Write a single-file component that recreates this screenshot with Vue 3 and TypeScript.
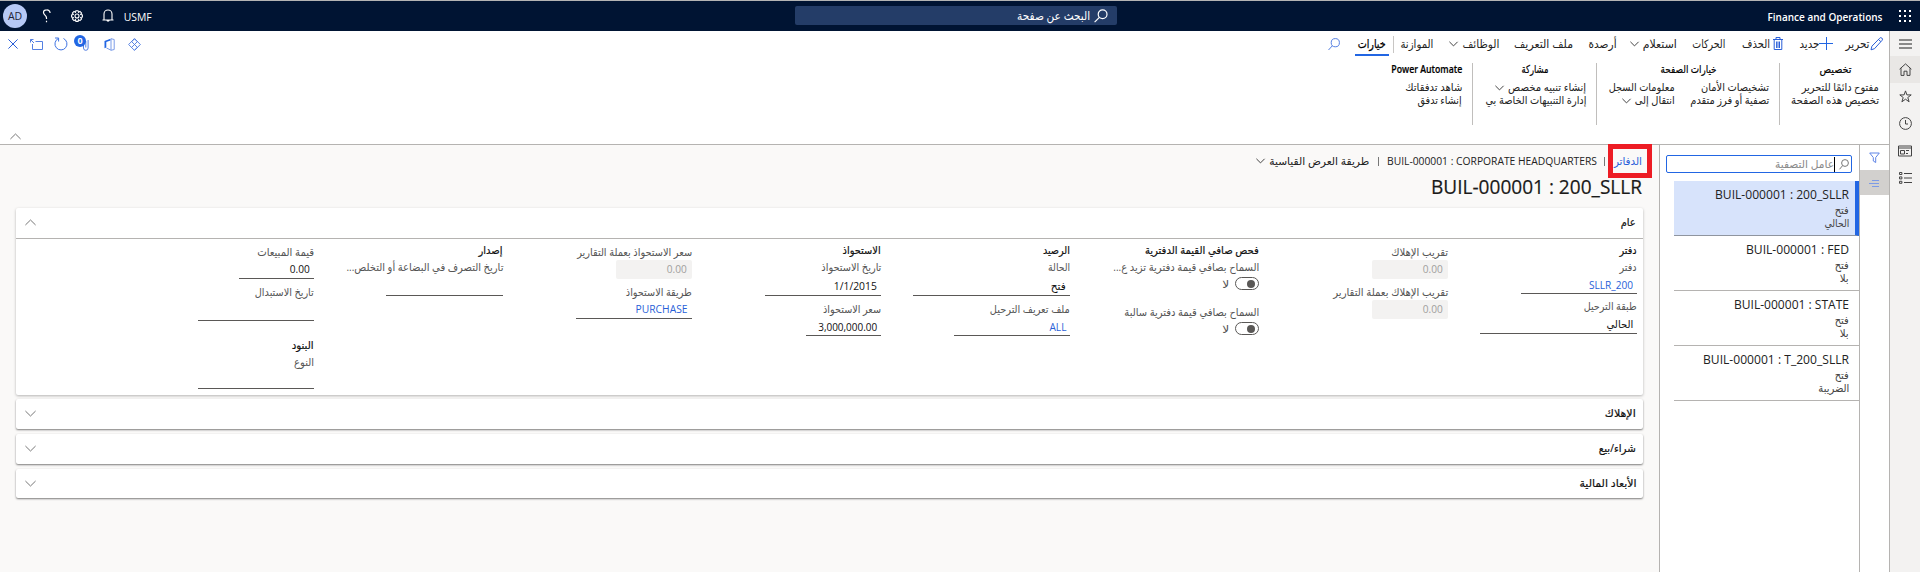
<script setup lang="ts">
interface Cmd { text: string; w: number; gap: number; icon?: string; chev?: boolean }
interface Field { kind: 'head' | 'label' | 'input' | 'box' | 'toggle'; h: number; text?: string; tw?: number; gap?: number; w?: number; link?: boolean }

// Squeezes or stretches a text run horizontally so that it occupies a fixed width.
const vFit = {
  mounted(el: HTMLElement, binding: { value?: number }) {
    if (!binding.value) return
    const natural = el.getBoundingClientRect().width
    if (!natural) return
    const rtl = getComputedStyle(el).direction === 'rtl'
    el.style.transformOrigin = rtl ? '100% 50%' : '0 50%'
    el.style.transform = `scaleX(${binding.value / natural})`
    el.style.marginInlineEnd = `${binding.value - natural}px`
  },
}

const commands: Cmd[] = [
  { text: 'تحرير', w: 24, gap: 6, icon: 'pencil' },
  { text: 'جديد', w: 20, gap: 13, icon: 'plus' },
  { text: 'الحذف', w: 28, gap: 16, icon: 'trash' },
  { text: 'الحركات', w: 33, gap: 17 },
  { text: 'استعلام', w: 34, gap: 15, chev: true },
  { text: 'أرصدة', w: 28, gap: 13 },
  { text: 'ملف التعريف', w: 59, gap: 16 },
  { text: 'الوظائف', w: 37, gap: 15, chev: true },
  { text: 'الموازنة', w: 33, gap: 16 },
]

const groups = [
  { title: 'تخصيص', tw: 32, w: 99, cols: [[{ t: 'مفتوح دائمًا للتحرير', w: 77 }, { t: 'تخصيص هذه الصفحة', w: 88 }]] },
  { title: 'خيارات الصفحة', tw: 56, w: 172, cols: [[{ t: 'تشخيصات الأمان', w: 68 }, { t: 'تصفية أو فرز متقدم', w: 79 }], [{ t: 'معلومات السجل', w: 66 }, { t: 'انتقال إلى', w: 40, c: true }]] },
  { title: 'مشاركة', tw: 27, w: 113, cols: [[{ t: 'إنشاء تنبيه مخصص', w: 78, c: true }, { t: 'إدارة التنبيهات الخاصة بي', w: 101 }]] },
  { title: 'Power Automate', tw: 71, w: 71, cols: [[{ t: 'شاهد تدفقاتك', w: 57 }, { t: 'إنشاء تدفق', w: 44 }]] },
] as { title: string; tw: number; w: number; cols: { t: string; w: number; c?: boolean }[][] }[]

const columns: Field[][] = [
  [
    { kind: 'head', h: 16, gap: 4, text: 'دفتر', tw: 17 },
    { kind: 'label', h: 18, text: 'دفتر', tw: 17 },
    { kind: 'input', h: 17, text: 'SLLR_200', tw: 44, w: 116, link: true },
    { kind: 'label', h: 18, gap: 4, text: 'طبقة الترحيل', tw: 53 },
    { kind: 'input', h: 18, text: 'الحالي', tw: 27, w: 157 },
  ],
  [
    { kind: 'label', h: 14, gap: 7, text: 'تقريب الإهلاك', tw: 57 },
    { kind: 'box', h: 19, text: '0.00', tw: 20, w: 76 },
    { kind: 'label', h: 14, gap: 7, text: 'تقريب الإهلاك بعملة التقارير', tw: 115 },
    { kind: 'box', h: 19, text: '0.00', tw: 20, w: 76 },
  ],
  [
    { kind: 'head', h: 16, gap: 4, text: 'فحص صافي القيمة الدفترية', tw: 114 },
    { kind: 'label', h: 18, text: 'السماح بصافي قيمة دفترية تزيد ع...', tw: 146 },
    { kind: 'toggle', h: 13 },
    { kind: 'label', h: 18, gap: 14, text: 'السماح بصافي قيمة دفترية سالبة', tw: 135 },
    { kind: 'toggle', h: 13 },
  ],
  [
    { kind: 'head', h: 16, gap: 4, text: 'الرصيد', tw: 27 },
    { kind: 'label', h: 18, text: 'الحالة', tw: 22 },
    { kind: 'input', h: 19, text: 'فتح', tw: 15, w: 157 },
    { kind: 'label', h: 18, gap: 5, text: 'ملف تعريف الترحيل', tw: 80 },
    { kind: 'input', h: 17, text: 'ALL', tw: 17, w: 116, link: true },
  ],
  [
    { kind: 'head', h: 16, gap: 4, text: 'الاستحواذ', tw: 38 },
    { kind: 'label', h: 18, text: 'تاريخ الاستحواذ', tw: 60 },
    { kind: 'input', h: 19, text: '1/1/2015', tw: 43, w: 116 },
    { kind: 'label', h: 18, gap: 5, text: 'سعر الاستحواذ', tw: 58 },
    { kind: 'input', h: 17, text: '3,000,000.00', tw: 59, w: 75 },
  ],
  [
    { kind: 'label', h: 14, gap: 7, text: 'سعر الاستحواذ بعملة التقارير', tw: 115 },
    { kind: 'box', h: 19, text: '0.00', tw: 20, w: 76 },
    { kind: 'label', h: 14, gap: 7, text: 'طريقة الاستحواذ', tw: 66 },
    { kind: 'input', h: 19, text: 'PURCHASE', tw: 52, w: 116, link: true },
  ],
  [
    { kind: 'head', h: 16, gap: 4, text: 'إصدار', tw: 24 },
    { kind: 'label', h: 18, text: 'تاريخ التصرف في البضاعة أو التخلص...', tw: 157 },
    { kind: 'input', h: 19, w: 117 },
  ],
  [
    { kind: 'label', h: 14, gap: 7, text: 'قيمة المبيعات', tw: 57 },
    { kind: 'input', h: 19, text: '0.00', tw: 20, w: 75 },
    { kind: 'label', h: 14, gap: 7, text: 'تاريخ الاستبدال', tw: 59 },
    { kind: 'input', h: 21, w: 116 },
    { kind: 'head', h: 16, gap: 17, text: 'البنود', tw: 22 },
    { kind: 'label', h: 18, text: 'النوع', tw: 20 },
    { kind: 'input', h: 17, w: 116 },
  ],
]

const books = [
  { title: 'BUIL-000001 : 200_SLLR', tw: 134, a: 'فتح', aw: 14, b: 'الحالي', bw: 25 },
  { title: 'BUIL-000001 : FED', tw: 103, a: 'فتح', aw: 14, b: 'بلا', bw: 9 },
  { title: 'BUIL-000001 : STATE', tw: 115, a: 'فتح', aw: 14, b: 'بلا', bw: 9 },
  { title: 'BUIL-000001 : T_200_SLLR', tw: 146, a: 'فتح', aw: 14, b: 'الضريبة', bw: 31 },
]

const tabs = [
  { t: 'الإهلاك', w: 31 },
  { t: 'شراء/بيع', w: 37 },
  { t: 'الأبعاد المالية', w: 57 },
]
</script>

<template>
  <div class="app" dir="rtl">
    <header class="top">
      <svg class="waffle" width="12" height="12" viewBox="0 0 12 12" fill="#fff">
        <template v-for="r in 3" :key="r"><rect v-for="c in 3" :key="c" :x="(c - 1) * 5" :y="(r - 1) * 5" width="2" height="2" /></template>
      </svg>
      <b class="brand"><span v-fit="115" class="t">Finance and Operations</span></b>
      <div class="find">
        <svg width="14" height="14" viewBox="0 0 14 14" fill="none" stroke="#fff" stroke-width="1.2"><circle cx="8.6" cy="5.2" r="4.4" /><path d="M5.4 8.4L.6 13.2" /></svg>
        <span v-fit="73" class="t">البحث عن صفحة</span>
      </div>
      <div class="account">
        <span v-fit="28" class="t usmf">USMF</span>
        <svg class="bell" width="12" height="14" viewBox="0 0 12 14" fill="none" stroke="#fff" stroke-width="1.1"><path d="M.5 11h11M2 11V5a4 4 0 0 1 8 0v6M4.8 11.2a1.3 1.3 0 0 0 2.5 0" /></svg>
        <svg class="gear" width="14" height="14" viewBox="0 0 14 14" fill="none" stroke="#fff" stroke-width="1.1"><path d="M5.9.7h2.2l.4 1.6 1.5-.9 1.6 1.6-.9 1.5 1.7.4v2.2l-1.7.4.9 1.5-1.6 1.6-1.5-.9-.4 1.7H5.9l-.4-1.7-1.5.9L2.4 9l.9-1.5L1.6 7.1V4.9l1.7-.4L2.4 3 4 1.4l1.5.9z" transform="translate(0 1)" /><circle cx="7" cy="7" r="2" /></svg>
        <svg class="help" width="9" height="14" viewBox="0 0 9 14" fill="none" stroke="#fff" stroke-width="1.2"><path d="M8.1 4A3.2 3.2 0 0 0 4.800.9C2.800.9 1.500 1.900 1.500 3.600c0 2.500 3 2.700 3 5.400V10M4.500 11.800v1.400" /></svg>
        <span class="avatar"><span>AD</span></span>
      </div>
    </header>

    <div class="body">
      <nav class="rail">
        <div class="r"><svg width="13" height="14" viewBox="0 0 13 14" stroke="#222" stroke-width="1.2"><path d="M0 3h13M0 7h13M0 11h13" /></svg></div>
        <div class="r on"><svg width="13" height="13" viewBox="0 0 13 13" fill="none" stroke="#444"><path d="M.6 6.2L6.5.9l5.9 5.3M2 5.2v7.2h3V8.2h3v4.2h3V5.2" /></svg></div>
        <div class="r"><svg width="13" height="13" viewBox="0 0 13 13" fill="none" stroke="#444"><path d="M6.5.9l1.4 4h4.3L8.8 7.5l1.3 4.3-3.6-2.6-3.6 2.6 1.3-4.3L.8 4.9h4.3z" /></svg></div>
        <div class="r"><svg width="13" height="13" viewBox="0 0 13 13" fill="none" stroke="#444"><circle cx="6.5" cy="6.5" r="5.9" /><path d="M6.5 3v4H9" /></svg></div>
        <div class="r"><svg width="14" height="12" viewBox="0 0 14 12" fill="none" stroke="#444"><path d="M.5 1h13v10H.5zM.5 3h13M2.500 5.500h4v3.500h-4zM8 5.500h3M8 8.500h2" /></svg></div>
        <div class="r"><svg width="13" height="12" viewBox="0 0 13 12" fill="none" stroke="#444"><path d="M.5.500h2.400v2H.5zM.5 4.900h2.400v2H.5zM.5 9.300h2.400v2H.5zM5 1.500h8M5 6h8M5 10.500h8" /></svg></div>
      </nav>

      <div class="work">
        <section class="ribbon">
          <div class="bar">
            <div v-for="c in commands" :key="c.text" class="cmd" :style="{ marginRight: c.gap + 'px' }">
              <svg v-if="c.icon === 'pencil'" width="13" height="14" viewBox="0 0 13 14" fill="none" stroke="#2a5fd8"><path d="M1 12.800l.9-3.600L9.600 1.300a1.500 1.500 0 0 1 2.500 2L4.500 11.700zM8.500 2.500l2.300 2.100" /></svg>
              <svg v-if="c.icon === 'plus'" width="14" height="14" viewBox="0 0 14 14" stroke="#2266e3"><path d="M0 6.500h14M7.500 0v13" /></svg>
              <svg v-if="c.icon === 'trash'" class="trash" width="10" height="14" viewBox="0 0 10 14" fill="none" stroke="#2a5fd8"><path d="M0 2.500h10M3 2.500v-2h4v2M1.200 2.500v10h7.600v-10M3.600 4.500v6.500M5 4.500v6.500M6.500 4.500v6.500" /></svg>
              <span v-fit="c.w" class="t">{{ c.text }}</span>
              <svg v-if="c.chev" class="cv" width="9" height="6" viewBox="0 0 9 6" fill="none" stroke="#444"><path d="M.4.800l4.100 4.100L8.600.800" /></svg>
            </div>
            <i class="sep"></i>
            <div class="cmd active"><span v-fit="28" class="t">خيارات</span></div>
            <svg class="look" width="12" height="13" viewBox="0 0 12 13" fill="none" stroke="#5580e2"><circle cx="7.300" cy="4.700" r="4.100" /><path d="M4.400 7.700L.5 12" /></svg>
            <div class="tools">
              <svg width="13" height="13" viewBox="0 0 13 13" fill="none" stroke="#4a78e0" stroke-width=".9"><path d="M6.500.6l5.900 5.900-5.900 5.900L.6 6.500zM3.700 3.700l5.600 5.600M9.300 3.700L3.700 9.300M6.500.800l2.800 2.900M6.500.800L3.700 3.700M6.500 12.200l2.800-2.900" /></svg>
              <svg class="office" width="11" height="13" viewBox="0 0 11 13" fill="none"><path d="M6.500.700L.5 3v7.200l1.800-.7V3.900L6.500 2.500z" fill="#2266e3" /><path d="M2.500 10L7 12.200V.700l3.200.8v10L7 12.300" stroke="#7b9ce8" /></svg>
              <div class="clip"><svg width="6" height="13" viewBox="0 0 6 13" fill="none" stroke="#5580e2"><path d="M.5 3v7a2.300 2.300 0 0 0 4.600 0V2M2.800 3v6.500" /></svg><span class="badge">0</span></div>
              <svg class="refresh" width="14" height="14" viewBox="0 0 14 14" fill="none" stroke="#3d72e2"><path d="M9.500 1.500a6 6 0 1 1-5.300.1M4.600 4.500V1H1" /></svg>
              <svg class="pop" width="13" height="11" viewBox="0 0 13 11" fill="none" stroke="#5580e2"><path d="M5.500 2.500h7v8h-10V5M.5 3.500v-3h3M.5.500L4 4" /></svg>
              <svg class="x" width="10" height="10" viewBox="0 0 10 10" stroke="#2a5fd8"><path d="M.4.400l9.200 9.200M9.600.400L.4 9.600" /></svg>
            </div>
          </div>
          <div class="groups">
            <div v-for="g in groups" :key="g.title" class="group">
              <div class="gt" :style="{ width: g.w + 'px' }"><span v-fit="g.tw" class="t">{{ g.title }}</span></div>
              <div class="gc">
                <div v-for="(col, i) in g.cols" :key="i">
                  <div v-for="l in col" :key="l.t" class="gl"><span v-fit="l.w" class="t">{{ l.t }}</span><svg v-if="l.c" class="cv" width="9" height="6" viewBox="0 0 9 6" fill="none" stroke="#444"><path d="M.4.800l4.100 4.100L8.600.800" /></svg></div>
                </div>
              </div>
            </div>
          </div>
          <svg class="fold" width="11" height="7" viewBox="0 0 11 7" fill="none" stroke="#777"><path d="M.4 6l5.100-5 5.100 5" /></svg>
        </section>

        <div class="page">
          <aside class="strip">
            <div class="s1"><svg width="11" height="12" viewBox="0 0 11 12" fill="none" stroke="#5f84e6"><path d="M.7 1h9.600L6.700 5.500v5L4.300 9V5.500z" /></svg></div>
            <div class="s2"><svg width="11" height="8" viewBox="0 0 11 8" stroke="#7d9be6"><path d="M3 1.500h7M0 4.500h10M3 7.500h7" /></svg></div>
          </aside>
          <aside class="list">
            <div class="filter">
              <svg width="10" height="11" viewBox="0 0 10 11" fill="none" stroke="#777"><circle cx="6" cy="4" r="3.400" /><path d="M3.600 6.600L.5 10.300" /></svg>
              <i class="caret"></i>
              <span v-fit="59" class="t">عامل التصفية</span>
            </div>
            <div v-for="(b, i) in books" :key="b.title" class="book" :class="{ sel: i === 0 }">
              <div class="bt" dir="ltr"><span v-fit="b.tw" class="t">{{ b.title }}</span></div>
              <div class="bs"><span v-fit="b.aw" class="t">{{ b.a }}</span></div>
              <div class="bs"><span v-fit="b.bw" class="t">{{ b.b }}</span></div>
            </div>
          </aside>
          <main class="main">
            <div class="crumbs">
              <a class="lnk"><span v-fit="28" class="t">الدفاتر</span><i class="mark"></i></a>
              <i class="bar1"></i>
              <span v-fit="210" class="t lat" dir="ltr">BUIL-000001 : CORPORATE HEADQUARTERS</span>
              <i class="bar2"></i>
              <span v-fit="100" class="t">طريقة العرض القياسية</span>
              <svg class="cv" width="9" height="6" viewBox="0 0 9 6" fill="none" stroke="#444"><path d="M.4.800l4.100 4.100L8.600.800" /></svg>
            </div>
            <h1 dir="ltr"><span v-fit="211" class="t">BUIL-000001 : 200_SLLR</span></h1>
            <section class="card">
              <div class="ch open"><span v-fit="15" class="t">عام</span><svg width="11" height="7" viewBox="0 0 11 7" fill="none" stroke="#777"><path d="M.4 6l5.100-5 5.100 5" /></svg></div>
              <div class="cols">
                <div v-for="(col, i) in columns" :key="i" class="col">
                  <div v-for="(f, j) in col" :key="j" class="f" :class="[f.kind, { link: f.link, lat: /^[A-Z0-9]/.test(f.text ?? '') }]" :style="{ height: f.h + 'px', marginTop: (f.gap ?? 0) + 'px', width: f.w ? f.w + 'px' : undefined }">
                    <template v-if="f.kind === 'toggle'"><span class="pill"></span><span v-fit="7" class="t no">لا</span></template>
                    <span v-else-if="f.text" v-fit="f.tw" class="t"><bdi>{{ f.text }}</bdi></span>
                  </div>
                </div>
              </div>
            </section>
            <section v-for="s in tabs" :key="s.t" class="card small">
              <div class="ch"><span v-fit="s.w" class="t">{{ s.t }}</span><svg width="11" height="7" viewBox="0 0 11 7" fill="none" stroke="#777"><path d="M.4 1l5.100 5 5.100-5" /></svg></div>
            </section>
          </main>
        </div>
      </div>
    </div>
  </div>
</template>

<style>
body { margin: 0; overflow: hidden; }
</style>

<style scoped>
* { box-sizing: border-box; }
.app { width: 1920px; height: 572px; background: #fff; display: flex; flex-direction: column; font: 11px 'Open Sans', 'DejaVu Sans', sans-serif; color: #222; overflow: hidden; }
.t { display: inline-block; white-space: nowrap; flex: none; padding-bottom: 2px; }
svg { flex: none; display: block; overflow: visible; }
.top { height: 31px; border-top: 1px solid #b4b4b4; background: #001433; display: flex; align-items: center; color: #fff; flex: none; }
.waffle { margin-right: 9px; }
.brand { margin-right: 17px; font-weight: 600; width: 115px; }
.brand .t, .usmf { padding-bottom: 0; }
.find { margin-right: 650px; width: 322px; height: 19px; margin-top: -1px; background: #243d68; border-radius: 2px; display: flex; align-items: center; padding-right: 9px; gap: 4px; font-size: 12px; }
.find .t { padding-bottom: 0; }
.bar .t { padding-bottom: 1px; }
.account { margin-right: auto; display: flex; align-items: center; padding-left: 3px; }
.bell { margin-right: 10px; }
.gear { margin-right: 18px; }
.help { margin-right: 19px; }
.avatar { margin-right: 15px; width: 24px; height: 24px; border-radius: 50%; background: #b6c9f6; color: #223; display: flex; align-items: center; justify-content: center; font-size: 10.5px; }
.body { flex: 1; display: flex; min-height: 0; }
.rail { width: 31px; background: #f3f2f1; border-left: 1px solid #b5b3b1; }
.r { height: 27px; display: flex; align-items: center; justify-content: center; }
.r:first-child { height: 25px; }
.on { background: #e9e7e5; }
.work { flex: 1; display: flex; flex-direction: column; min-width: 0; }
.ribbon { height: 114px; border-bottom: 1px solid #b5b3b1; flex: none; }
.bar { display: flex; height: 26px; align-items: center; }
.cmd { display: flex; align-items: center; height: 26px; font-size: 11.5px; }
.trash { margin-left: 3px; }
.cv { margin-right: 4px; }
.sep { width: 1px; height: 17px; background: #c8c6c4; margin-right: 6px; }
.active { margin-right: 4px; padding: 2px 3px 0; border-bottom: 2px solid #2266e3; height: 24px; color: #000; -webkit-text-stroke: .25px #000; }
.look { margin-right: 15px; }
.tools { margin-right: auto; display: flex; align-items: center; padding-left: 8px; }
.office { margin-right: 13px; }
.clip { margin-right: 15px; display: flex; position: relative; width: 14px; }
.badge { position: absolute; left: -1px; top: -3px; width: 12px; height: 12px; border-radius: 50%; background: #2266e3; color: #fff; font: bold 9px/12px 'Open Sans', sans-serif; text-align: center; }
.refresh { margin-right: 7px; }
.pop { margin-right: 11px; }
.x { margin-right: 12px; }
.groups { display: flex; padding-right: 10px; height: 76px; padding-top: 6px; }
.group { height: 62px; }
.group + .group { border-right: 1px solid #c0bebc; padding-right: 10px; }
.gt { height: 14px; display: flex; justify-content: center; align-items: center; font-weight: 500; color: #000; margin-top: -1px; padding-left: 11px; }
.group:last-child .gt { font-weight: 600; padding-left: 0; }
.gc { display: flex; gap: 15px; padding-top: 5px; }
.gl { height: 13px; display: flex; align-items: center; }
.gl .cv { margin-right: 4px; }
.fold { margin: 0 auto 0 10px; }
.page { flex: 1; display: flex; min-height: 0; }
.strip { width: 29px; }
.s1 { height: 25px; display: flex; align-items: center; justify-content: center; }
.s2 { height: 25px; background: #d2d0ce; display: flex; align-items: center; justify-content: center; }
.list { width: 201px; border-left: 1px solid #b5b3b1; border-right: 1px solid #b5b3b1; padding: 10px 0 0 0; }
.filter { margin: 0 7px 8px 6px; height: 18px; border: 1px solid #2266e3; border-radius: 2px; display: flex; align-items: center; padding-right: 2px; color: #8a8a8a; }
.caret { width: 1px; height: 15px; background: #000; margin-right: 4px; }
.book { margin-left: 14px; height: 55px; border-bottom: 1px solid #b5b3b1; padding: 5px 10px 0 0; }
.book.sel { background: #d7e3fb; border-right: 4px solid #2266e3; padding-right: 6px; border-bottom-color: #8f959f; }
.bt { height: 17px; display: flex; justify-content: flex-end; align-items: center; font-size: 13px; }
.bs { height: 13px; display: flex; align-items: center; color: #444; }
.bt + .bs { margin-top: 1px; }
.main { flex: 1; background: #faf9f8; padding: 0 16px; min-width: 0; }
.crumbs { height: 32px; display: flex; align-items: center; padding-right: 1px; }
.lnk { color: #2a5fd8; position: relative; display: flex; }
.mark { position: absolute; left: -6px; top: -9px; width: 44px; height: 34px; border: 5px solid #ed1c24; }
.bar1, .bar2 { width: 1px; height: 9px; background: #777; }
.bar1 { margin: 0 9px 0 7px; }
.bar2 { margin: 0 8px 0 9px; }
h1 { margin: 0; height: 31px; padding: 0 0 9px; display: flex; justify-content: flex-end; align-items: center; font-size: 20px; font-weight: 400; padding-right: 1px; line-height: 24px; color: #1b1a19; -webkit-text-stroke: .2px #1b1a19; }
.card { background: #fff; height: 187px; border-radius: 2px; box-shadow: 0 1px 3px rgba(0, 0, 0, .28); margin-bottom: 4px; }
.card.small { height: 30px; margin-bottom: 5px; box-shadow: 0 1px 2px rgba(0, 0, 0, .5); }
.card.small:last-child { height: 29px; }
.ch { height: 30px; display: flex; justify-content: space-between; align-items: center; padding: 0 7px 2px 9px; font-weight: 500; color: #111; }
.ch.open { height: 31px; border-bottom: 1px solid #b5b3b1; }
.head .t, .ch .t, .gt .t { -webkit-text-stroke: .2px currentColor; }
.cols { display: flex; padding-right: 6px; }
.col { width: 189px; display: flex; flex-direction: column; align-items: flex-start; flex: none; }
.f { display: flex; align-items: center; white-space: nowrap; }
.label .t, .head .t { padding-bottom: 3px; }
.head { color: #111; font-weight: 500; }
.label { color: #555; }
.input { border-bottom: 1px solid #5a5856; padding-right: 4px; color: #111; }
.box { background: #f3f2f1; padding-right: 5px; color: #a19f9d; border-radius: 2px; }
.lat { font-size: 11px; }
.link { color: #2a5fd8; }
.pill { width: 24px; height: 13px; border: 1px solid #5a5856; border-radius: 7px; display: flex; align-items: center; }
.pill::before { content: ''; width: 8px; height: 8px; border-radius: 50%; background: #5a5856; margin-right: 3px; }
.no { margin-right: 6px; padding: 0; color: #555; }
</style>
